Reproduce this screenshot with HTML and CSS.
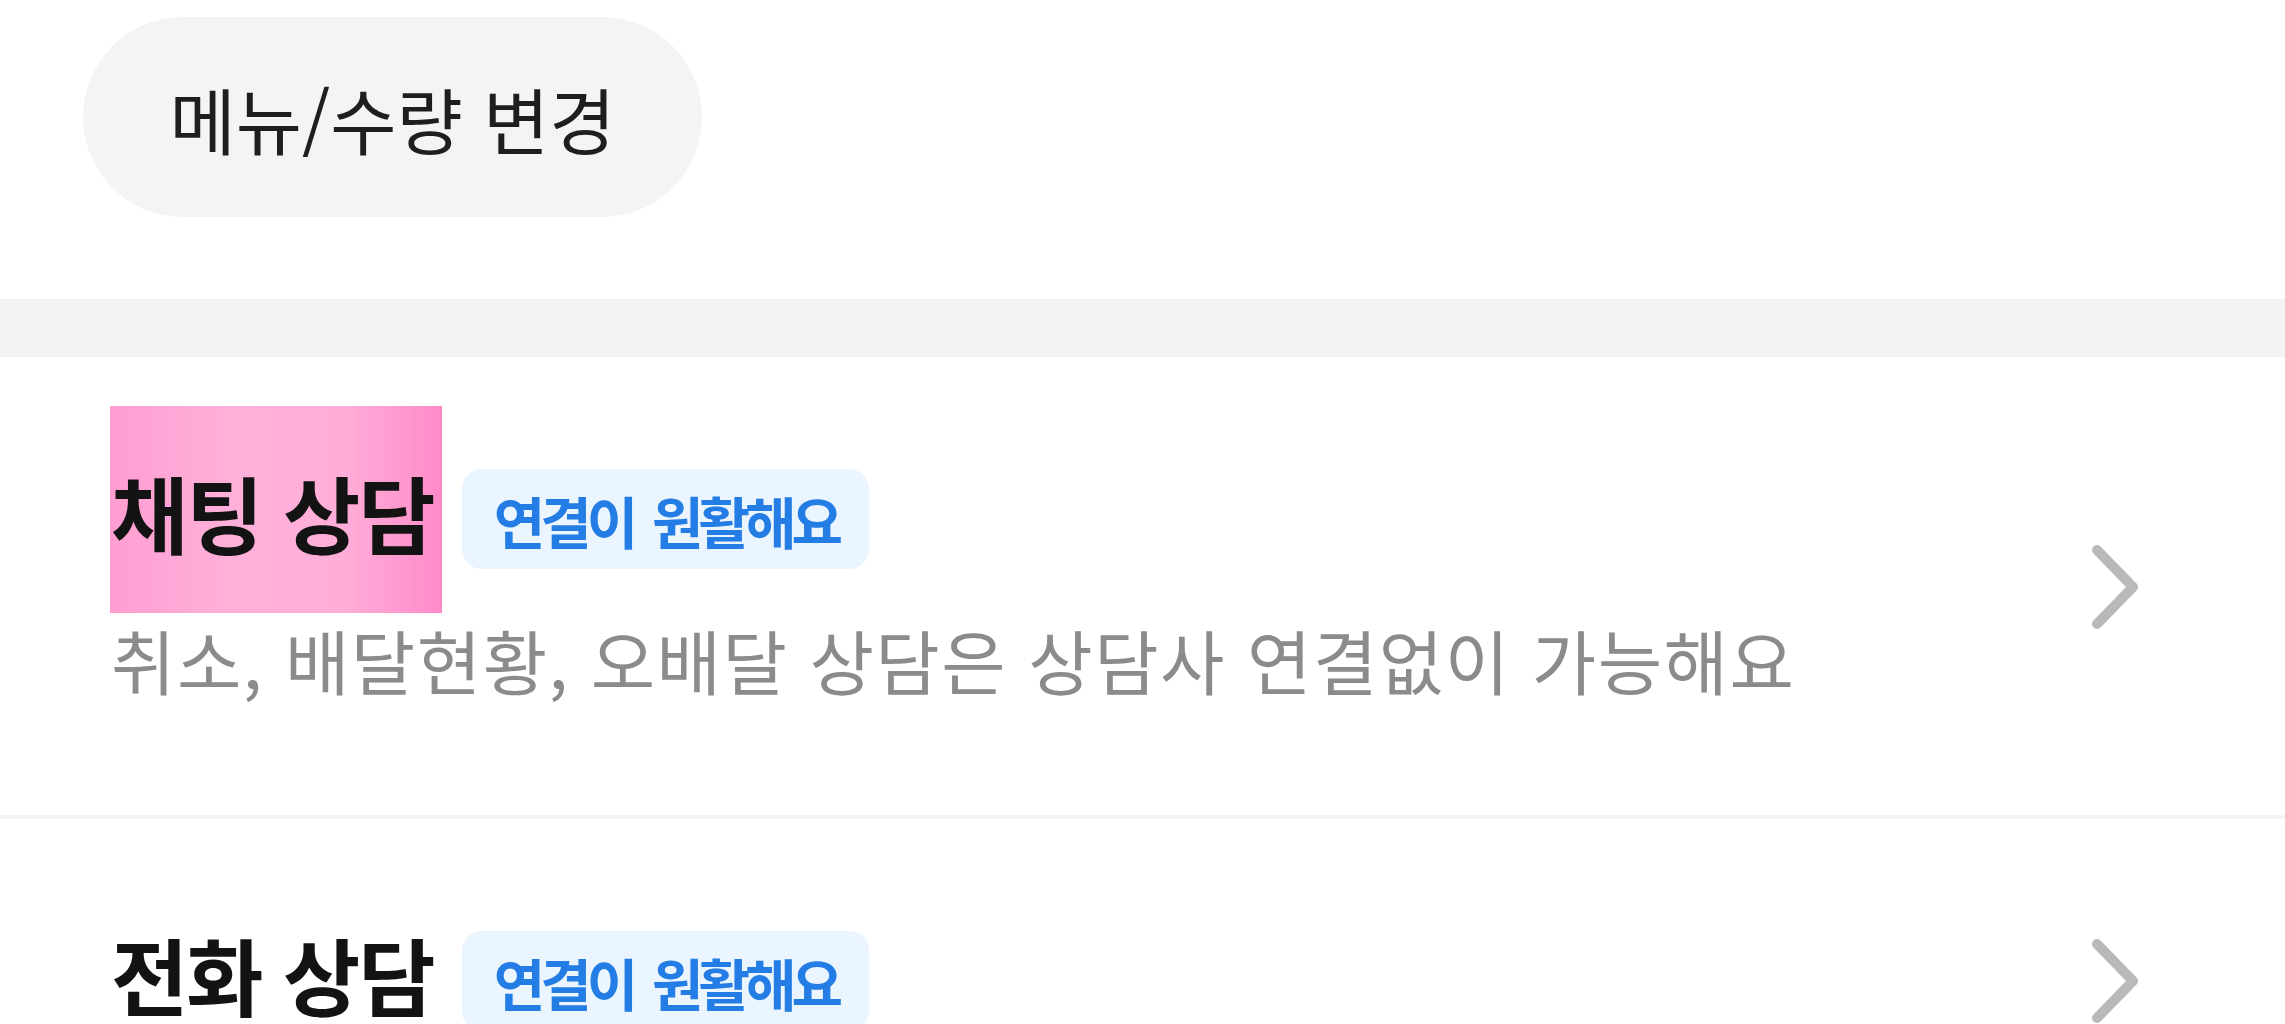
FILE: index.html
```html
<!DOCTYPE html>
<html lang="ko">
<head>
<meta charset="utf-8">
<title>상담</title>
<link rel="stylesheet" href="styles.css">
</head>
<body>
<div class="top">
  <button class="pill">메뉴/수량 변경</button>
</div>
<div class="band"></div>
<div class="row">
  <div class="row-main">
    <div class="title-line">
      <span class="title hl">채팅 상담</span>
      <span class="badge">연결이 원활해요</span>
    </div>
    <p class="sub">취소, 배달현황, 오배달 상담은 상담사 연결없이 가능해요</p>
  </div>
  <svg class="chev" width="48" height="86" viewBox="0 0 48 86"><polyline points="6,6 42,43 6,80" fill="none" stroke="#b8b9bb" stroke-width="10" stroke-linecap="round" stroke-linejoin="round"/></svg>
</div>
<div class="row">
  <div class="row-main">
    <div class="title-line">
      <span class="title">전화 상담</span>
      <span class="badge">연결이 원활해요</span>
    </div>
  </div>
  <svg class="chev" width="48" height="86" viewBox="0 0 48 86"><polyline points="6,6 42,43 6,80" fill="none" stroke="#b8b9bb" stroke-width="10" stroke-linecap="round" stroke-linejoin="round"/></svg>
</div>
</body>
</html>
```
FILE: styles.css
```css
html, body {
  margin: 0;
  padding: 0;
  background: #ffffff;
  font-family: "Noto Sans CJK KR", "Noto Sans", sans-serif;
  overflow: hidden;
}
.top {
  padding: 17px 0 82px 83px;
}
.pill {
  display: flex;
  align-items: center;
  justify-content: center;
  width: 619px;
  height: 200px;
  border: none;
  border-radius: 100px;
  background: #f3f4f6;
  font-family: inherit;
  font-size: 72px;
  font-weight: 400;
  color: #1e1e1e;
  padding: 0;
}
.band {
  height: 58px;
  background: #f2f3f5;
}
.row {
  display: flex;
  align-items: center;
  padding: 112px 146px 110px 111px;
  border-bottom: 4px solid #f4f5f7;
}
.row-main {
  flex: 1;
}
.title-line {
  display: flex;
  align-items: center;
  gap: 28px;
  height: 100px;
}
.title {
  position: relative;
  top: -7px;
  z-index: 0;
  font-size: 84px;
  font-weight: 700;
  letter-spacing: -2px;
  color: #131313;
  line-height: 100px;
}
.hl::before {
  content: "";
  position: absolute;
  z-index: -1;
  left: -1px;
  right: -8px;
  top: -56px;
  bottom: -51px;
  background: linear-gradient(90deg, #ff9dd1 0%, #ffb0da 35%, #ffaed9 70%, #ff8ac8 100%);
}
.badge {
  display: flex;
  align-items: center;
  height: 100px;
  padding: 0 31px 0 32px;
  border-radius: 20px;
  background: #ebf5ff;
  color: #247de4;
  font-size: 56px;
  font-weight: 700;
  letter-spacing: -5px;
  word-spacing: 8px;
}
.sub {
  margin: 46px 0 0;
  font-size: 70px;
  line-height: 90px;
  color: #8b8b8b;
  letter-spacing: 1.5px;
}
.chev {
  flex: none;
  display: block;
}
```
